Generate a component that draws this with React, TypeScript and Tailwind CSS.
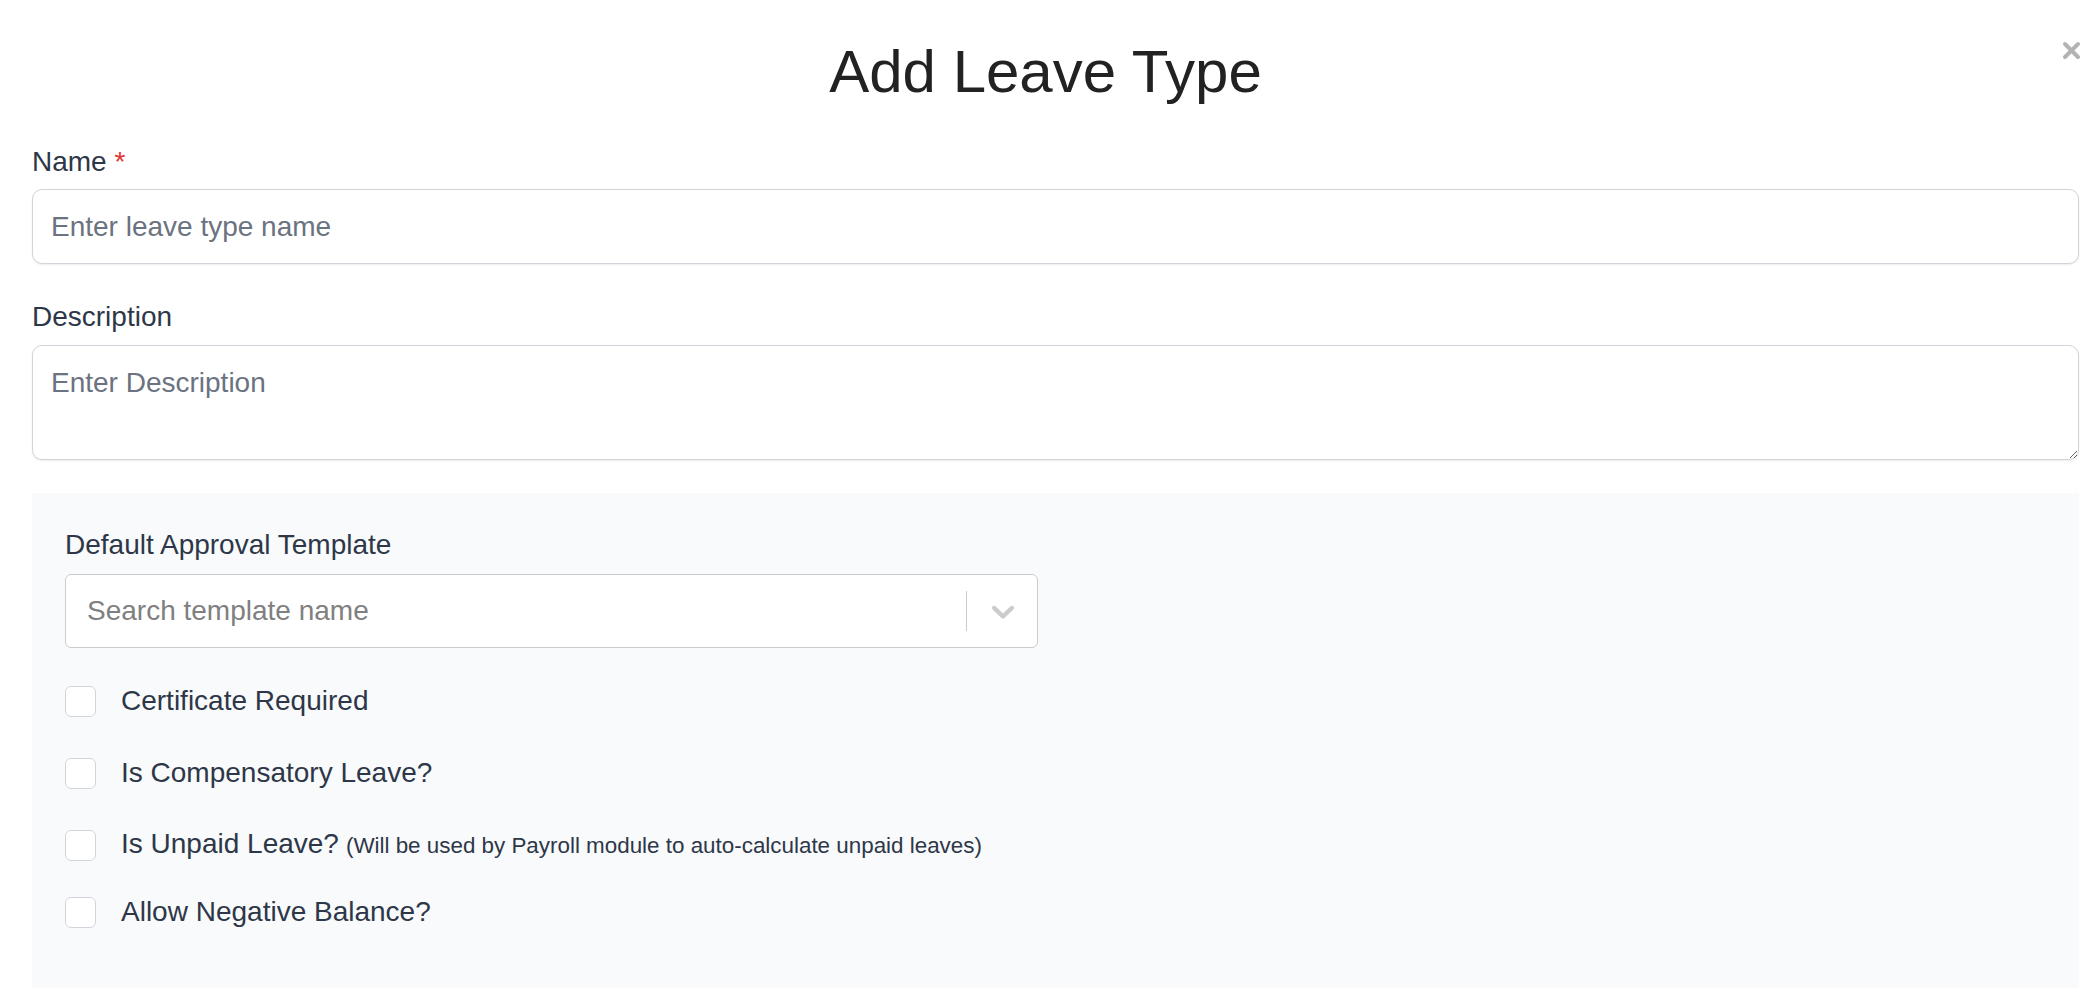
const options = [
  { label: "Certificate Required", mt: "mt-[32px]" },
  { label: "Is Compensatory Leave?", mt: "mt-[30px]" },
  {
    label: "Is Unpaid Leave?",
    hint: "(Will be used by Payroll module to auto-calculate unpaid leaves)",
    mt: "mt-[30px]",
  },
  { label: "Allow Negative Balance?", mt: "mt-[25px]" },
];

const App = () => {
  return (
    <div className="relative min-h-screen bg-white font-['Liberation_Sans',Arial,sans-serif] text-[#2d3748]">
      <button
        type="button"
        className="absolute top-[41px] right-[16px] w-[19px] h-[19px] text-[#b3b3b3]"
        aria-label="Close"
      >
        <svg viewBox="0 0 19 19" className="w-full h-full">
          <path d="M3 3 L16 16 M16 3 L3 16" stroke="currentColor" strokeWidth="4" strokeLinecap="round" />
        </svg>
      </button>

      <h1 className="pt-[42px] text-center text-[60px] leading-[60px] text-[#222222] pr-[6px]">
        Add Leave Type
      </h1>

      <form className="pl-[32px] pr-[18px]">
        <label className="block mt-[39px] text-[28px] leading-[42px]">
          Name <span className="text-[#e3342f]">*</span>
        </label>
        <input
          type="text"
          placeholder="Enter leave type name"
          className="block w-full mt-[6px] h-[75px] px-[18px] text-[28px] border-[1.5px] border-[#d1d5db] rounded-[10px] bg-white shadow-[0_1px_2px_rgba(0,0,0,0.08)] placeholder:text-[#6b7280] outline-none"
        />

        <label className="block mt-[32px] text-[28px] leading-[42px]">Description</label>
        <textarea
          placeholder="Enter Description"
          className="block w-full mt-[7px] h-[115px] px-[18px] py-[16px] text-[28px] leading-[42px] border-[1.5px] border-[#d1d5db] rounded-[10px] bg-white shadow-[0_1px_2px_rgba(0,0,0,0.08)] placeholder:text-[#6b7280] outline-none resize-y"
        />

        <div className="mt-[33px] bg-[#f9fafb] pl-[33px] pt-[31px] pb-[55px]">
          <label className="block mb-[8px] text-[28px] leading-[42px]">Default Approval Template</label>
          <div className="flex items-center w-[973px] h-[74px] bg-white border-[1.5px] border-[#cccccc] rounded-[6px]">
            <div className="flex-1 pl-[21px] text-[28px] text-[#808080]">Search template name</div>
            <span className="w-[1.5px] h-[40px] bg-[#cccccc]" />
            <svg viewBox="0 0 20 20" className="w-[38px] h-[38px] ml-[17px] mr-[15px] fill-[#cccccc]">
              <path d="M4.516 7.548c0.436-0.446 1.043-0.481 1.576 0l3.908 3.747 3.908-3.747c0.533-0.481 1.141-0.446 1.574 0 0.436 0.445 0.408 1.197 0 1.615-0.406 0.418-4.695 4.502-4.695 4.502-0.217 0.223-0.502 0.335-0.787 0.335s-0.57-0.112-0.789-0.335c0 0-4.287-4.084-4.695-4.502s-0.436-1.17 0-1.615z" />
            </svg>
          </div>

          {options.map((o) => (
            <label key={o.label} className={`flex items-center h-[42px] ${o.mt}`}>
              <input
                type="checkbox"
                className="appearance-none w-[31px] h-[31px] bg-white border-[1.5px] border-[#d1d5db] rounded-[6px] shrink-0"
              />
              <span className="ml-[25px] text-[28px] leading-[42px] whitespace-nowrap">
                {o.label}
                {o.hint && <span className="text-[22.4px] ml-[7px]">{o.hint}</span>}
              </span>
            </label>
          ))}
        </div>
      </form>
    </div>
  );
};

export default App;
